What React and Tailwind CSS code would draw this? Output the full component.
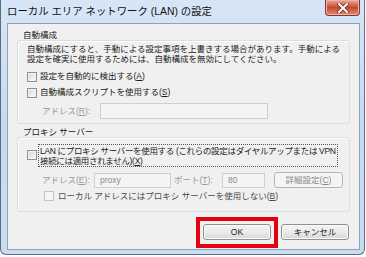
import React from 'react';

// Windows 7 style checkbox
const Box = ({ disabled }) => (
  <span
    className={
      disabled
        ? 'inline-block w-[10px] h-[10px] shrink-0 border border-[#c2c2c2] bg-[#f5f5f5]'
        : 'inline-block w-[10px] h-[10px] shrink-0 border border-[#8e8f8f] bg-gradient-to-br from-[#d6d6d6] to-[#fbfbfb] shadow-[inset_0_0_0_1px_#f4f4f4]'
    }
  />
);

const Btn = ({ children, className = '' }) => (
  <div
    className={`h-[16px] flex items-center justify-center rounded-[3px] border border-[#8f8f8f] bg-gradient-to-b from-[#f4f4f4] via-[#ebebeb] to-[#d7d7d7] shadow-[inset_0_0_0_1px_#fbfbfb] ${className}`}
  >
    {children}
  </div>
);

export default function App() {
  return (
    <div className="w-[366px] h-[257px] bg-white font-['Liberation_Sans','Noto_Sans_CJK_JP',sans-serif] text-[8.5px] text-[#1b1b1b]">
      <div className="w-[365px] h-[255px] flex flex-col border-x border-b border-[#5d6d80] rounded-b-[6px] bg-gradient-to-b from-[#d7e6f6] via-[#c6daef] to-[#cadcf1] pl-[6px] pr-[4px] pb-[4px]">
        {/* title bar */}
        <div className="h-[23px] flex items-start justify-between">
          <span className="mt-[6px] text-[10.4px] leading-[12px] text-[#111] whitespace-nowrap">
            ローカル エリア ネットワーク (LAN) の設定
          </span>
          <div className="w-[35px] h-[16px] rounded-b-[4px] border border-t-0 border-[#86362a] bg-gradient-to-b from-[#eaa99b] via-[#c8462d] to-[#dc8a73] shadow-[inset_0_0_0_1px_#f0b2a4] flex items-center justify-center">
            <svg width="12" height="10" viewBox="0 0 12 10">
              <path d="M2 1 L10 9 M10 1 L2 9" stroke="#6a2a22" strokeWidth="3.4" strokeLinecap="square" />
              <path d="M2 1 L10 9 M10 1 L2 9" stroke="#ffffff" strokeWidth="2" strokeLinecap="square" />
            </svg>
          </div>
        </div>

        {/* client area */}
        <div className="flex-1 bg-[#f0f0f0] border border-[#8ea3bb] flex flex-col px-[9px]">
          {/* 自動構成 */}
          <div className="mt-[6px] pl-[6px] leading-[10px]">自動構成</div>
          <div className="border border-[#d5dfe5] rounded-[3px] shadow-[inset_1px_1px_0_#ffffff] pl-[9px] pr-[6px] pt-[3px] pb-[4px]">
            <div className="leading-[10px] whitespace-nowrap">
              <div>自動構成にすると、手動による設定事項を上書きする場合があります。手動による</div>
              <div>設定を確実に使用するためには、自動構成を無効にしてください。</div>
            </div>
            <div className="mt-[6px] h-[13px] flex items-center gap-[3px] whitespace-nowrap">
              <Box />
              <span>
                設定を自動的に検出する(<u>A</u>)
              </span>
            </div>
            <div className="mt-[3px] h-[13px] flex items-center gap-[3px] whitespace-nowrap">
              <Box />
              <span>
                自動構成スクリプトを使用する(<u>S</u>)
              </span>
            </div>
            <div className="mt-[4px] h-[16px] flex items-center pl-[15px]">
              <span className="w-[58px] text-[#9a9a9a] whitespace-nowrap">
                アドレス(<u>R</u>):
              </span>
              <div className="w-[168px] h-[16px] border border-[#c9d0d7] bg-[#f4f4f4]" />
            </div>
          </div>

          {/* プロキシ サーバー */}
          <div className="mt-[3px] pl-[6px] leading-[10px]">プロキシ サーバー</div>
          <div className="border border-[#d5dfe5] rounded-[3px] shadow-[inset_1px_1px_0_#ffffff] pl-[9px] pr-[6px] pt-[6px] pb-[9px]">
            <div className="flex items-start">
              <div className="mt-[6px]">
                <Box />
              </div>
              <div className="ml-[1px] border border-dotted border-[#555] px-[1px] pt-[1px] leading-[10px] whitespace-nowrap tracking-[-0.33px]">
                <div>LAN にプロキシ サーバーを使用する (これらの設定はダイヤルアップまたは VPN</div>
                <div>
                  接続には適用されません)(<u>X</u>)
                </div>
              </div>
            </div>
            <div className="mt-[5px] h-[16px] flex items-center pl-[15px] text-[#9a9a9a] whitespace-nowrap">
              <span className="w-[52px]">
                アドレス(<u>E</u>):
              </span>
              <div className="w-[77px] h-[15px] border border-[#c9d0d7] bg-[#f4f4f4] pl-[5px] flex items-center text-[#8a8a8a]">
                proxy
              </div>
              <span className="ml-[3px] w-[48px]">
                ポート(<u>T</u>):
              </span>
              <div className="w-[43px] h-[15px] border border-[#c9d0d7] bg-[#f4f4f4] pl-[5px] flex items-center text-[#8a8a8a]">
                80
              </div>
              <div className="ml-[9px] w-[69px] h-[16px] rounded-[3px] border border-[#b0b5ba] bg-[#f4f4f4] flex items-center justify-center text-[#8a8a8a]">
                詳細設定(<u>C</u>)
              </div>
            </div>
            <div className="mt-[2px] h-[12px] flex items-center gap-[4px] pl-[17px] whitespace-nowrap text-[#4a4a4a]">
              <Box disabled />
              <span>
                ローカル アドレスにはプロキシ サーバーを使用しない(<u>B</u>)
              </span>
            </div>
          </div>

          {/* buttons */}
          <div className="mt-[5px] flex items-start justify-end pr-[1px]">
            <div className="border-4 border-[#e5000e] px-[3px] pt-[3px] pb-[4px]">
              <Btn className="w-[68px] border-[#3c7cae] shadow-[inset_0_0_0_1px_#a6d9f4] from-[#f1f5f8] via-[#e4ecf2] to-[#ccdbe7]">
                OK
              </Btn>
            </div>
            <Btn className="ml-[3px] mt-[7px] w-[68px]">キャンセル</Btn>
          </div>
        </div>
      </div>
    </div>
  );
}
